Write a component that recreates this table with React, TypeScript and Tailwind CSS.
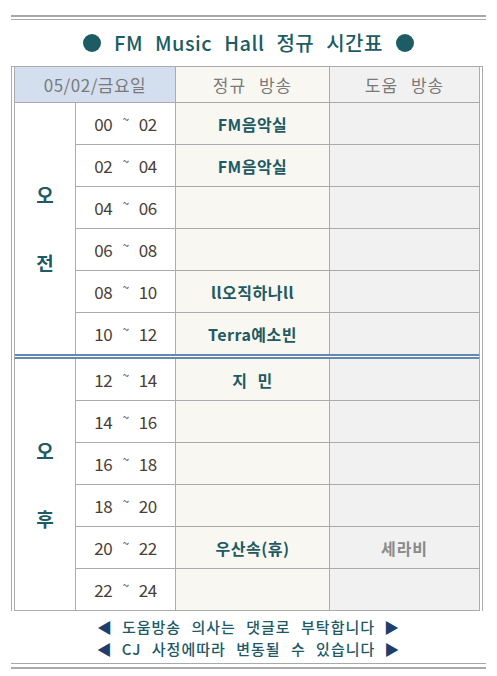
import React from 'react';

const amRows = [
  { time: ['00', '02'], prog: 'FM음악실', help: '' },
  { time: ['02', '04'], prog: 'FM음악실', help: '' },
  { time: ['04', '06'], prog: '', help: '' },
  { time: ['06', '08'], prog: '', help: '' },
  { time: ['08', '10'], prog: 'll오직하나ll', help: '' },
  { time: ['10', '12'], prog: 'Terra예소빈', help: '' },
];

const pmRows = [
  { time: ['12', '14'], prog: '지 민', help: '' },
  { time: ['14', '16'], prog: '', help: '' },
  { time: ['16', '18'], prog: '', help: '' },
  { time: ['18', '20'], prog: '', help: '' },
  { time: ['20', '22'], prog: '우산속(휴)', help: '세라비' },
  { time: ['22', '24'], prog: '', help: '' },
];

type Row = { time: string[]; prog: string; help: string };

const font = { fontFamily: '"Noto Sans CJK KR", "Noto Sans", sans-serif' };

function Section({ label, rows }: { label: string[]; rows: Row[] }) {
  return (
    <div className="flex">
      <div className="w-[61px] border-r border-[#ababab] flex flex-col items-center justify-center gap-[46px] text-[19px] font-bold leading-[22px] text-[#1d5a62]">
        <span>{label[0]}</span>
        <span>{label[1]}</span>
      </div>
      <div className="flex flex-col flex-1">
        {rows.map((r, i) => (
          <div
            key={i}
            className={`flex ${i < rows.length - 1 ? 'h-[42px] border-b border-[#ababab]' : 'h-[41px]'}`}
          >
            <div className="w-[100px] border-r border-[#ababab] flex items-center justify-center text-[17px] text-[#4a3e36] tracking-tight">
              <span>{r.time[0]}</span>
              <span className="relative -top-[5px] mx-[10px] text-[12px]">~</span>
              <span>{r.time[1]}</span>
            </div>
            <div className="w-[154px] border-r border-[#ababab] bg-[#f9f7f2] flex items-center justify-center text-[16px] font-bold text-[#1d5a62] tracking-[0.5px] [word-spacing:6px]">
              {r.prog}
            </div>
            <div className="flex-1 bg-[#f1f1f1] flex items-center justify-center text-[16px] font-bold text-[#8a8a8a] tracking-[1px]">
              {r.help}
            </div>
          </div>
        ))}
      </div>
    </div>
  );
}

export default function App() {
  return (
    <div className="w-[497px] h-[676px] bg-white pt-[15px]" style={font}>
      <div className="mx-[11px] h-[5px] border-t-2 border-b border-[#a9a9a9]" />

      <div className="h-[46px] flex items-center justify-center gap-[13px] text-[#1d5c64]">
        <span className="w-[18px] h-[18px] rounded-full bg-[#1e5c63]" />
        <span className="text-[20px] font-medium tracking-[0.5px] [word-spacing:7px]">
          FM Music Hall 정규 시간표
        </span>
        <span className="w-[18px] h-[18px] rounded-full bg-[#1e5c63]" />
      </div>

      <div className="ml-[11px] w-[472px] border-t border-x border-[#ababab] px-[2px]">
        <div className="border-x border-b border-[#ababab]">
          <div className="flex h-[36px] border-b border-[#ababab] text-[17px] text-[#7a7a7a]">
            <div className="w-[161px] border-r border-[#ababab] bg-[#d3deee] flex items-center justify-center tracking-[0.5px]">
              05/02/금요일
            </div>
            <div className="w-[154px] border-r border-[#ababab] bg-[#f9f7f2] flex items-center justify-center tracking-[1px] [word-spacing:8px]">
              정규 방송
            </div>
            <div className="flex-1 bg-[#f1f1f1] flex items-center justify-center tracking-[1px] [word-spacing:8px]">
              도움 방송
            </div>
          </div>
          <Section label={['오', '전']} rows={amRows} />
          <div className="h-[5px] border-y-2 border-[#6389b0]" />
          <Section label={['오', '후']} rows={pmRows} />
        </div>
      </div>

      <div className="flex flex-col items-center pt-[5px] text-[15px] font-medium leading-[22px] text-[#1d5a66] tracking-[1px] [word-spacing:6px]">
        <div className="flex items-center gap-[9px]">
          <span className="text-[#1f3e6c] text-[15px]">◀</span>
          <span>도움방송 의사는 댓글로 부탁합니다</span>
          <span className="text-[#1f3e6c] text-[15px]">▶</span>
        </div>
        <div className="flex items-center gap-[9px]">
          <span className="text-[#1f3e6c] text-[15px]">◀</span>
          <span>CJ 사정에따라 변동될 수 있습니다</span>
          <span className="text-[#1f3e6c] text-[15px]">▶</span>
        </div>
      </div>

      <div className="mx-[11px] mt-[3px] h-[6px] border-t border-b-2 border-[#a9a9a9]" />
    </div>
  );
}
